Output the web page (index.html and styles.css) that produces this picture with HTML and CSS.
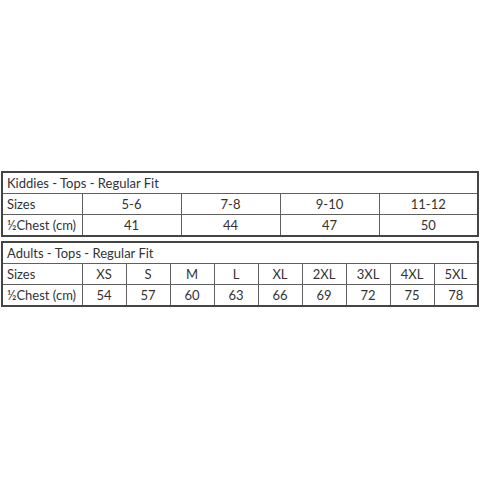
FILE: index.html
```html
<!DOCTYPE html>
<html>
<head>
<meta charset="utf-8">
<link rel="stylesheet" href="styles.css">
</head>
<body>
<div class="wrap">
<table class="chart kids">
  <colgroup><col class="label-col"><col><col><col><col></colgroup>
  <tr><td class="title" colspan="5">Kiddies - Tops - Regular Fit</td></tr>
  <tr><td class="label">Sizes</td><td>5-6</td><td>7-8</td><td>9-10</td><td>11-12</td></tr>
  <tr><td class="label">½Chest (cm)</td><td>41</td><td>44</td><td>47</td><td>50</td></tr>
</table>
<table class="chart adults">
  <colgroup><col class="label-col"><col><col><col><col><col><col><col><col><col></colgroup>
  <tr><td class="title" colspan="10">Adults - Tops - Regular Fit</td></tr>
  <tr><td class="label">Sizes</td><td>XS</td><td>S</td><td>M</td><td>L</td><td>XL</td><td>2XL</td><td>3XL</td><td>4XL</td><td>5XL</td></tr>
  <tr><td class="label">½Chest (cm)</td><td>54</td><td>57</td><td>60</td><td>63</td><td>66</td><td>69</td><td>72</td><td>75</td><td>78</td></tr>
</table>
</div>
</body>
</html>
```

FILE: styles.css
```css
html, body {
  margin: 0;
  padding: 0;
  background: #fff;
}
.wrap {
  padding-top: 171px;
  padding-left: 1px;
  display: flex;
  flex-direction: column;
  gap: 4px;
}
.chart {
  width: 478px;
  border-collapse: collapse;
  table-layout: fixed;
  font-family: Lato, "Open Sans", sans-serif;
  font-size: 13px;
  color: #333;
  border: 2px solid #444;
}
.chart td {
  border: 1px solid #606060;
  height: 20px;
  padding: 0;
  text-align: center;
  line-height: 20px;
  white-space: nowrap;
}
.chart .label-col {
  width: 80px;
}
.chart td.title,
.chart td.label {
  text-align: left;
  padding-left: 4px;
}
```
